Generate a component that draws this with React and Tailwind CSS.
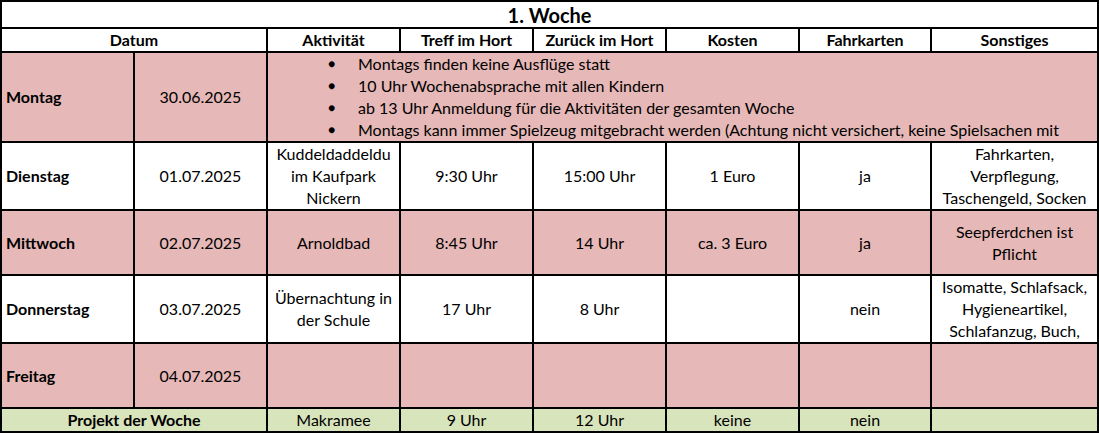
import React from 'react';

const days = [
    {
        name: 'Dienstag',
        date: '01.07.2025',
        bg: 'bg-white',
        act: ['Kuddeldaddeldu', 'im Kaufpark', 'Nickern'],
        treff: '9:30 Uhr',
        zurueck: '15:00 Uhr',
        kosten: '1 Euro',
        karten: 'ja',
        sonst: ['Fahrkarten,', 'Verpflegung,', 'Taschengeld, Socken'],
    },
    {
        name: 'Mittwoch',
        date: '02.07.2025',
        bg: 'bg-[#e6b8b7]',
        act: ['Arnoldbad'],
        treff: '8:45 Uhr',
        zurueck: '14 Uhr',
        kosten: 'ca. 3 Euro',
        karten: 'ja',
        sonst: ['Seepferdchen ist', 'Pflicht'],
    },
    {
        name: 'Donnerstag',
        date: '03.07.2025',
        bg: 'bg-white',
        act: ['Übernachtung in', 'der Schule'],
        treff: '17 Uhr',
        zurueck: '8 Uhr',
        kosten: '',
        karten: 'nein',
        sonst: ['Isomatte, Schlafsack,', 'Hygieneartikel,', 'Schlafanzug, Buch,'],
    },
    {
        name: 'Freitag',
        date: '04.07.2025',
        bg: 'bg-[#e6b8b7]',
        act: [],
        treff: '',
        zurueck: '',
        kosten: '',
        karten: '',
        sonst: [],
    },
];

const montag = [
    'Montags finden keine Ausflüge statt',
    '10 Uhr Wochenabsprache mit allen Kindern',
    'ab 13 Uhr Anmeldung für die Aktivitäten der gesamten Woche',
    'Montags kann immer Spielzeug mitgebracht werden (Achtung nicht versichert, keine Spielsachen mit',
];

const cell = 'border-2 border-black p-0 text-center align-middle';

const App = () => {
    return (
        <div className="w-[1099px] h-[433px] bg-white text-black overflow-hidden" style={{ fontFamily: 'Lato, "Open Sans", sans-serif' }}>
            <table className="table-fixed border-collapse w-[1097px] text-[16px] leading-[22px]">
                <colgroup>
                    <col className="w-[133px]" />
                    <col className="w-[133px]" />
                    <col className="w-[133px]" />
                    <col className="w-[133px]" />
                    <col className="w-[133px]" />
                    <col className="w-[133px]" />
                    <col className="w-[132px]" />
                    <col className="w-[167px]" />
                </colgroup>
                <tbody>
                    <tr className="h-[27px]">
                        <td colSpan={8} className={`${cell} font-bold text-[20px] leading-[22px]`}>1. Woche</td>
                    </tr>
                    <tr className="h-[24px] font-bold">
                        <td colSpan={2} className={cell}>Datum</td>
                        <td className={cell}>Aktivität</td>
                        <td className={cell}>Treff im Hort</td>
                        <td className={cell}>Zurück im Hort</td>
                        <td className={cell}>Kosten</td>
                        <td className={cell}>Fahrkarten</td>
                        <td className={cell}>Sonstiges</td>
                    </tr>
                    <tr className="h-[87px] bg-[#e6b8b7]">
                        <td className={`${cell} text-left pl-1 font-bold`}>Montag</td>
                        <td className={cell}>30.06.2025</td>
                        <td colSpan={6} className={`${cell} text-left`}>
                            <div className="overflow-hidden whitespace-nowrap">
                                {montag.map((line) => (
                                    <div key={line} className="flex items-center">
                                        <span className="w-[90px] pl-[60px] text-[12px]">●</span>
                                        <span>{line}</span>
                                    </div>
                                ))}
                            </div>
                        </td>
                    </tr>
                    {days.map((d) => (
                        <tr key={d.name} className={`h-[65px] ${d.bg}`}>
                            <td className={`${cell} text-left pl-1 font-bold`}>{d.name}</td>
                            <td className={cell}>{d.date}</td>
                            <td className={cell}>
                                {d.act.map((l) => <div key={l}>{l}</div>)}
                            </td>
                            <td className={cell}>{d.treff}</td>
                            <td className={cell}>{d.zurueck}</td>
                            <td className={cell}>{d.kosten}</td>
                            <td className={cell}>{d.karten}</td>
                            <td className={cell}>
                                {d.sonst.map((l) => <div key={l} className="whitespace-nowrap">{l}</div>)}
                            </td>
                        </tr>
                    ))}
                    <tr className="h-[24px] bg-[#d8e4bc]">
                        <td colSpan={2} className={`${cell} font-bold`}>Projekt der Woche</td>
                        <td className={cell}>Makramee</td>
                        <td className={cell}>9 Uhr</td>
                        <td className={cell}>12 Uhr</td>
                        <td className={cell}>keine</td>
                        <td className={cell}>nein</td>
                        <td className={cell}></td>
                    </tr>
                </tbody>
            </table>
        </div>
    );
};

export default App;
